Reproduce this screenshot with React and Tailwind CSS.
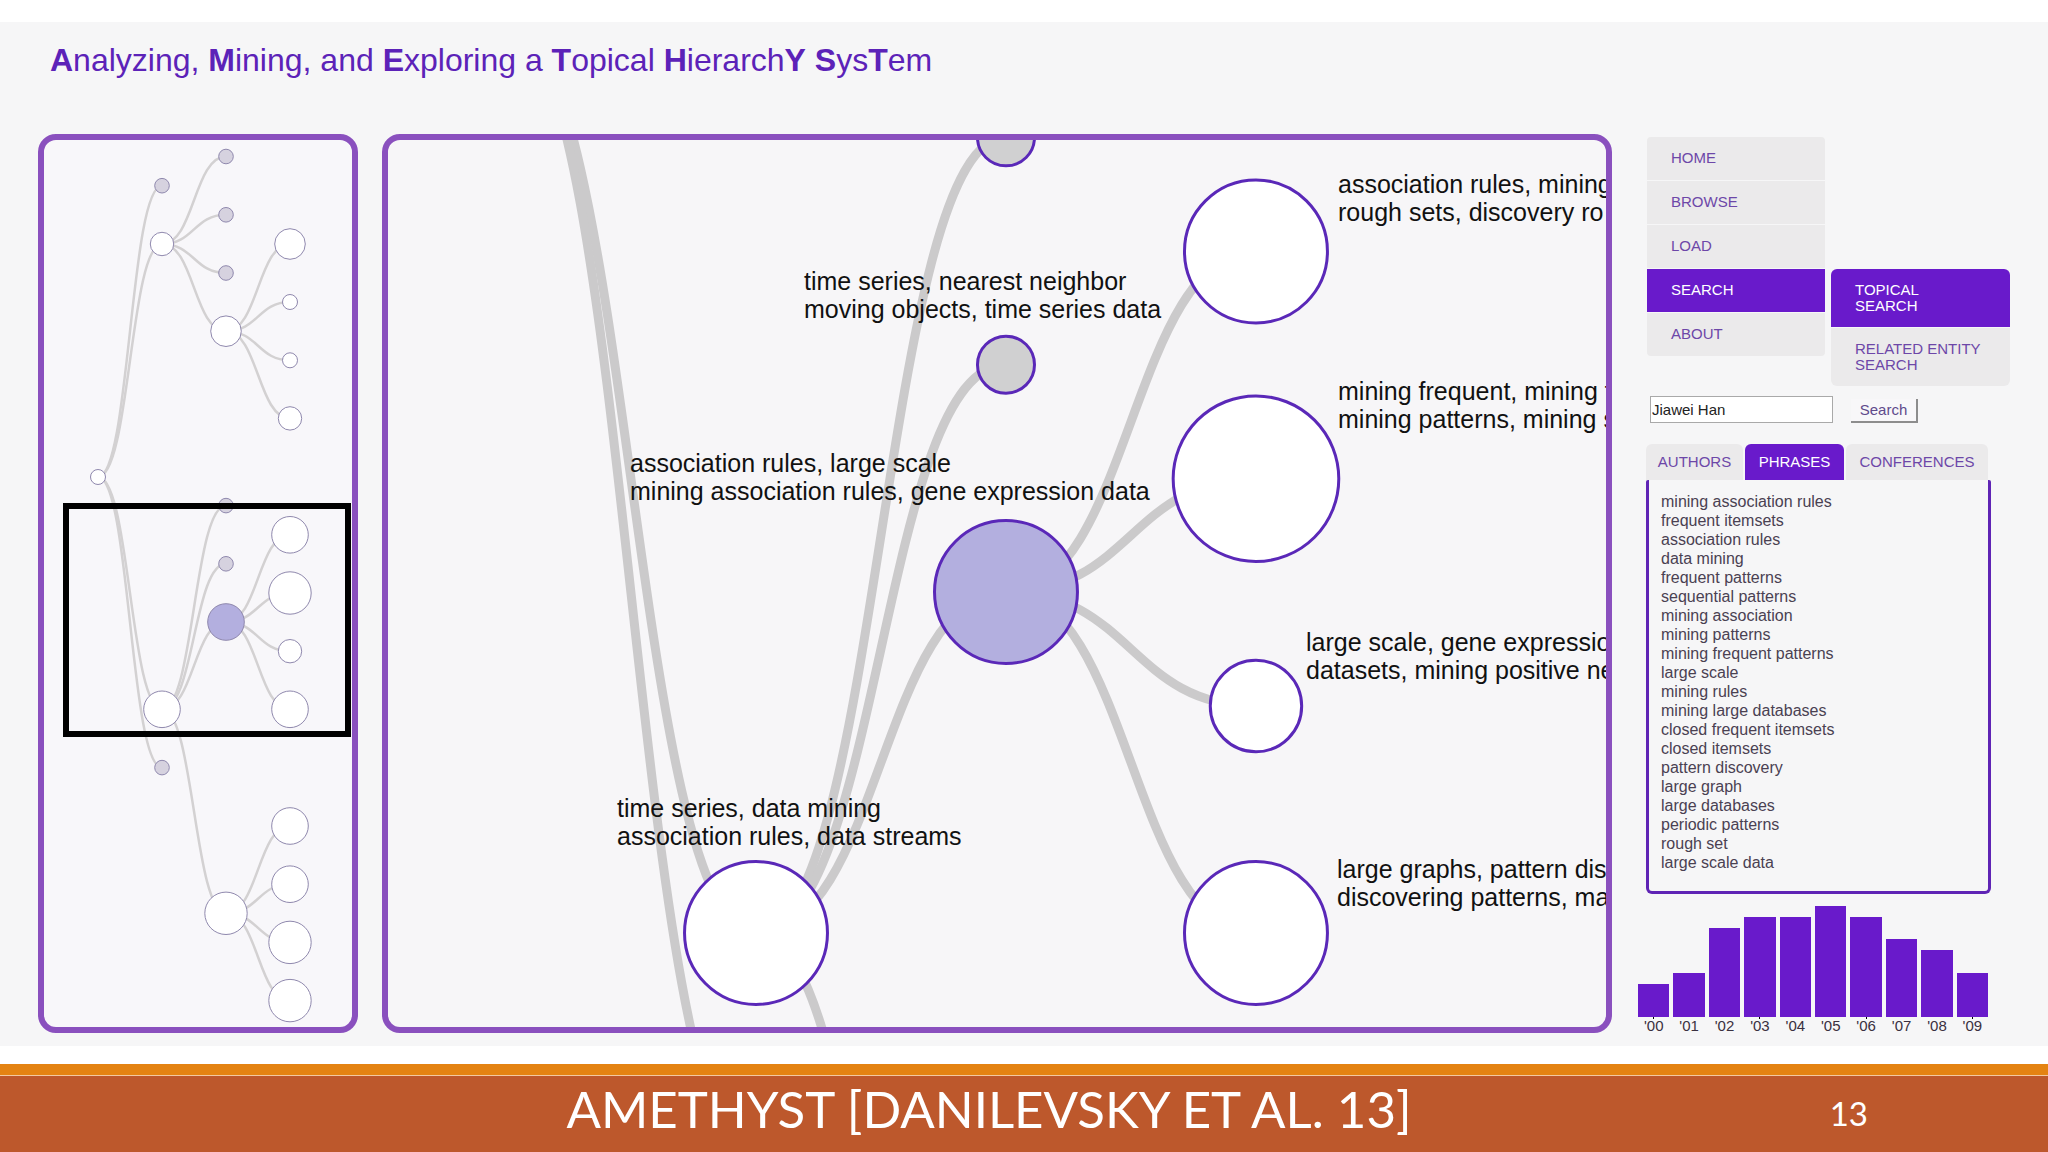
import { useState } from 'react';
import clsx from 'clsx';

const NODES = {
  root: { x: 98, y: 477, r: 7.5 },
  a: { x: 162, y: 185.7, r: 7.3, leaf: true },
  b: { x: 162, y: 244, r: 11.7 },
  c: { x: 162, y: 709.3, r: 18.3 },
  d: { x: 162, y: 767.6, r: 7.3, leaf: true },
  b1: { x: 226, y: 156.5, r: 7.3, leaf: true },
  b2: { x: 226, y: 214.8, r: 7.3, leaf: true },
  b3: { x: 226, y: 273, r: 7.3, leaf: true },
  b4: { x: 226, y: 331.2, r: 15.3 },
  b41: { x: 290, y: 244, r: 15.3 },
  b42: { x: 290, y: 302, r: 7.5 },
  b43: { x: 290, y: 360.3, r: 7.5 },
  b44: { x: 290, y: 418.4, r: 11.7 },
  c1: { x: 226, y: 505.6, r: 7.3, leaf: true },
  c2: { x: 226, y: 563.8, r: 7.3, leaf: true },
  c3: { x: 226, y: 622, r: 18.3, selected: true },
  c4: { x: 226, y: 913.3, r: 21.2 },
  c31: { x: 290, y: 534.8, r: 18.3 },
  c32: { x: 290, y: 593, r: 21.2 },
  c33: { x: 290, y: 651.2, r: 11.7 },
  c34: { x: 290, y: 709.3, r: 18.3 },
  c41: { x: 290, y: 826, r: 18.3 },
  c42: { x: 290, y: 884.2, r: 18.3 },
  c43: { x: 290, y: 942.4, r: 21.2 },
  c44: { x: 290, y: 1000.6, r: 21.2 },
};

const LINKS = [
  ['root', 'a'], ['root', 'b'], ['root', 'c'], ['root', 'd'],
  ['b', 'b1'], ['b', 'b2'], ['b', 'b3'], ['b', 'b4'],
  ['b4', 'b41'], ['b4', 'b42'], ['b4', 'b43'], ['b4', 'b44'],
  ['c', 'c1'], ['c', 'c2'], ['c', 'c3'], ['c', 'c4'],
  ['c3', 'c31'], ['c3', 'c32'], ['c3', 'c33'], ['c3', 'c34'],
  ['c4', 'c41'], ['c4', 'c42'], ['c4', 'c43'], ['c4', 'c44'],
];

const LABELS = [
  { x: 804, y: 290, lines: ['time series, nearest neighbor', 'moving objects, time series data'] },
  { x: 630, y: 472, lines: ['association rules, large scale', 'mining association rules, gene expression data'] },
  { x: 617, y: 817, lines: ['time series, data mining', 'association rules, data streams'] },
  { x: 1338, y: 193, lines: ['association rules, mining', 'rough sets, discovery ro'] },
  { x: 1338, y: 400, lines: ['mining frequent, mining f', 'mining patterns, mining s'] },
  { x: 1306, y: 651, lines: ['large scale, gene expressio', 'datasets, mining positive ne'] },
  { x: 1337, y: 878, lines: ['large graphs, pattern dis', 'discovering patterns, ma'] },
];

const TABS = {
  AUTHORS: [],
  PHRASES: [
    'mining association rules', 'frequent itemsets', 'association rules', 'data mining',
    'frequent patterns', 'sequential patterns', 'mining association', 'mining patterns',
    'mining frequent patterns', 'large scale', 'mining rules', 'mining large databases',
    'closed frequent itemsets', 'closed itemsets', 'pattern discovery', 'large graph',
    'large databases', 'periodic patterns', 'rough set', 'large scale data',
  ],
  CONFERENCES: [],
};

const YEARS = [
  ["'00", 3], ["'01", 4], ["'02", 8], ["'03", 9], ["'04", 9],
  ["'05", 10], ["'06", 9], ["'07", 7], ["'08", 6], ["'09", 4],
];

const ZOOM = 3.906;

// centre the zoomed view on the "time series, data mining" node
const zoomed = (n) => ({ ...n, x: (n.x - 162) * ZOOM + 756, y: (n.y - 709.3) * ZOOM + 933, r: n.r * ZOOM });
const same = (n) => n;

function Tree({ project, linkClass, nodeClass, leafClass }) {
  return (
    <>
      {LINKS.map(([from, to]) => {
        const s = project(NODES[from]);
        const t = project(NODES[to]);
        const mid = (s.x + t.x) / 2;
        return (
          <path key={to} className={linkClass}
            d={`M${s.x},${s.y}C${mid},${s.y} ${mid},${t.y} ${t.x},${t.y}`} />
        );
      })}
      {Object.entries(NODES).map(([id, node]) => {
        const n = project(node);
        return (
          <circle key={id} cx={n.x} cy={n.y} r={n.r}
            className={clsx(nodeClass, n.selected ? 'fill-[#b3afdf]' : n.leaf ? leafClass : 'fill-white')} />
        );
      })}
    </>
  );
}

function Overview() {
  return (
    <div className="w-[320px] shrink-0 self-start overflow-hidden rounded-[18px] border-6 border-[#8a50be] bg-[#f8f7fa]">
      <svg viewBox="44 140 308 887" className="block w-full" role="img" aria-label="Topic hierarchy overview">
        <Tree project={same} linkClass="fill-none stroke-[#d3d1d2] stroke-[2.5]"
          nodeClass="stroke-[#8f88ad] stroke-1" leafClass="fill-[#d6d2df]" />
        <rect x="66" y="506" width="282" height="228" className="fill-none stroke-black stroke-6" />
      </svg>
    </div>
  );
}

function TopicView() {
  return (
    <div className="min-w-0 flex-1 self-start overflow-hidden rounded-[18px] border-6 border-[#8a50be] bg-[#f7f6f8]">
      <svg viewBox="388 140 1218 887" className="block w-full" role="img" aria-label="Topic hierarchy">
        <Tree project={zoomed} linkClass="fill-none stroke-[#cbcacb] stroke-9"
          nodeClass="stroke-[#5a28b8] stroke-3" leafClass="fill-[#d0d0d1]" />
        {LABELS.map(({ x, y, lines }) => (
          <text key={lines[0]} x={x} y={y} className="fill-[#111] text-[25px]">
            <tspan>{lines[0]}</tspan>
            <tspan x={x} dy="28">{lines[1]}</tspan>
          </text>
        ))}
      </svg>
    </div>
  );
}

function Menu() {
  const plain = 'flex h-[43px] w-[178px] items-center bg-[#ebeaeb] px-6 text-[#6d47a8]';
  return (
    <nav className="ml-[9px]">
      <ul className="flex w-[178px] flex-col gap-px">
        <li><a href="#home" className={clsx(plain, 'rounded-t-sm')}>HOME</a></li>
        <li><a href="#browse" className={plain}>BROWSE</a></li>
        <li><a href="#load" className={plain}>LOAD</a></li>
        <li className="relative">
          <a href="#search" className="flex h-[43px] items-center bg-[#691acb] px-6 text-white">SEARCH</a>
          <ul className="absolute top-0 left-full ml-1.5 flex w-[179px] flex-col gap-px leading-4">
            <li>
              <a href="#topical" className="flex h-[58px] items-center rounded-t-md bg-[#691acb] pr-16 pl-6 text-white">TOPICAL SEARCH</a>
            </li>
            <li>
              <a href="#related" className="flex h-[58px] items-center rounded-b-md bg-[#ebeaeb] pr-4 pl-6 text-[#6d47a8]">RELATED ENTITY SEARCH</a>
            </li>
          </ul>
        </li>
        <li><a href="#about" className={clsx(plain, 'rounded-b-sm')}>ABOUT</a></li>
      </ul>
    </nav>
  );
}

function Results() {
  const [tab, setTab] = useState('PHRASES');

  return (
    <div className="mt-[21px] ml-2 w-[345px]">
      <div role="tablist" className="grid grid-cols-[97px_99px_142px] gap-0.5">
        {Object.keys(TABS).map((name) => (
          <button key={name} role="tab" aria-selected={tab === name} onClick={() => setTab(name)}
            className={clsx('h-9 rounded-t-md',
              tab === name ? 'bg-[#691acb] text-white' : 'bg-[#ebeaeb] text-[#6d47a8]')}>
            {name}
          </button>
        ))}
      </div>
      <ul role="tabpanel" aria-label={tab}
        className="h-[414px] rounded-md rounded-t-xs border-3 border-t-0 border-[#5f24b5] pt-3 pl-3 text-[16px] leading-[19px] text-[#4a4152]">
        {TABS[tab].map((phrase) => <li key={phrase}>{phrase}</li>)}
      </ul>
    </div>
  );
}

function YearChart() {
  return (
    <div className="mt-3 flex w-[350px] gap-1">
      {YEARS.map(([year, count], i) => (
        <div key={year} className="flex-1">
          <div className="flex h-[111px] items-end">
            <div className="w-full bg-[#691acb]" style={{ height: `${count * 10}%` }} />
          </div>
          <div className={clsx('mx-auto h-0.5 w-px', i % 3 === 0 && 'bg-black')} />
          <div className="text-center leading-[14px] text-[#3a3040]">{year}</div>
        </div>
      ))}
    </div>
  );
}

export default function App() {
  const [query, setQuery] = useState('Jiawei Han');

  return (
    <div className="flex min-h-screen flex-col bg-white pt-[22px] font-['Liberation_Sans',Arial,sans-serif]">
      <main className="flex-1 bg-[#f6f6f7] px-[38px] pb-2.5">
        <h1 className="px-3 pt-[18px] text-[32px] leading-10 text-[#5c22b8]">
          <b>A</b>nalyzing, <b>M</b>ining, and <b>E</b>xploring a <b>T</b>opical <b>H</b>ierarch<b>Y</b> <b>S</b>ys<b>T</b>em
        </h1>

        <div className="mt-[54px] flex">
          <Overview />
          <div className="ml-6 flex min-w-0 flex-1">
            <TopicView />
          </div>

          <aside className="ml-[26px] w-[372px] shrink-0 pt-[3px] text-[15px]">
            <Menu />
            <form className="mt-10 ml-3 flex items-end" onSubmit={(e) => e.preventDefault()}>
              <input type="text" aria-label="Search query" value={query} onChange={(e) => setQuery(e.target.value)}
                className="h-[27px] w-[183px] border border-[#a9a9a9] bg-white px-px text-[#222]" />
              <button type="submit"
                className="ml-[18px] h-6 w-[67px] border-r-2 border-b-2 border-[#8d8d8d] bg-[#f8f7f9] leading-5 text-[#5f4a8c]">
                Search
              </button>
            </form>
            <Results />
            <YearChart />
          </aside>
        </div>
      </main>

      <footer className="mt-[18px] border-t-11 border-[#e48312]">
        <div className="relative flex h-[77px] items-center justify-center border-t border-[#f3c9a0] bg-[#bd582c] font-[Lato,sans-serif] text-white">
          <h2 className="pr-[70px] pb-3 text-[51px] leading-none">AMETHYST [DANILEVSKY ET AL. 13]</h2>
          <span className="absolute right-[180px] text-[33px]">13</span>
        </div>
      </footer>
    </div>
  );
}
